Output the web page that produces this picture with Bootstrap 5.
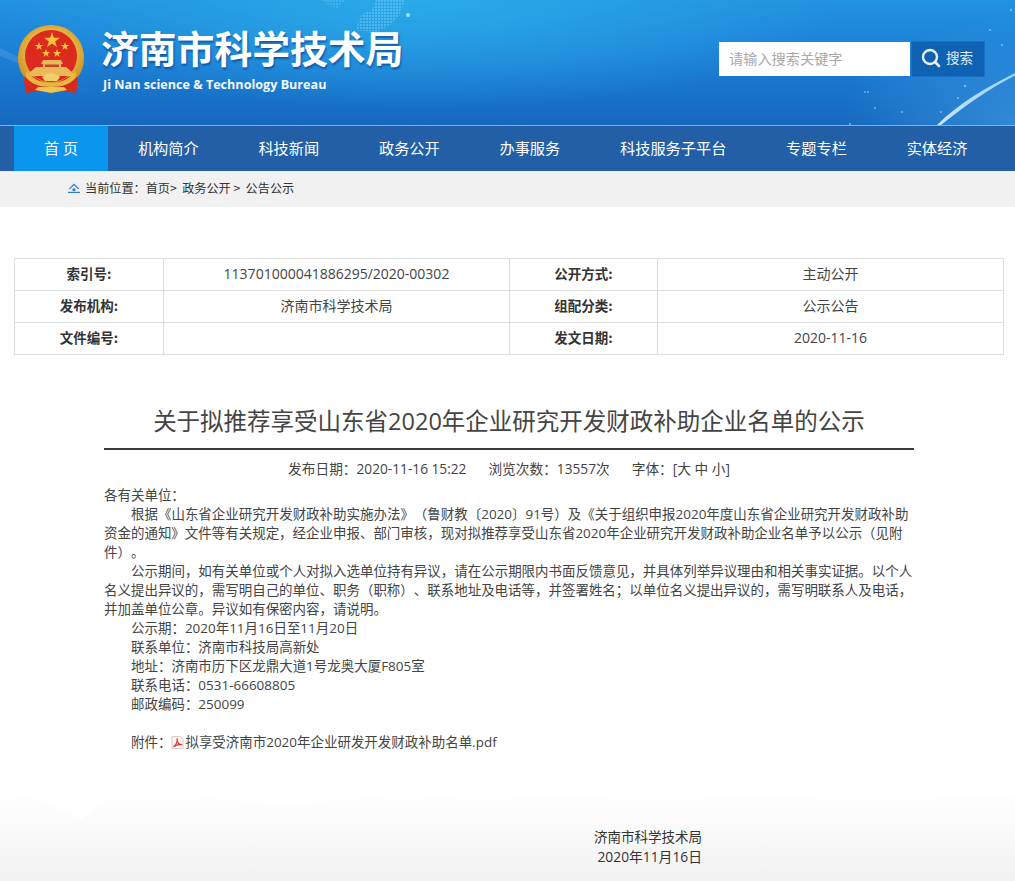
<!DOCTYPE html>
<html lang="zh-CN">
<head>
<meta charset="utf-8">
<title>济南市科学技术局</title>
<link href="https://cdn.jsdelivr.net/npm/bootstrap@5.3.0/dist/css/bootstrap.min.css" rel="stylesheet">
<style>
html,body{height:881px;overflow:hidden}
body{font-family:"Open Sans","Noto Sans CJK SC",sans-serif;font-size:14px;line-height:19px;color:#333;background:#fff;position:relative;text-spacing-trim:space-all}
.hdr{height:125px;position:relative;overflow:hidden;background:radial-gradient(ellipse 420px 110px at 420px 0,#2aaae8 0,rgba(42,170,232,0) 100%),linear-gradient(180deg,#2192de 0,#1c7fd6 45%,#1568be 100%)}
.hdr-art{position:absolute;inset:0;width:100%;height:100%}
.brand{position:relative;padding:25px 0 0 18px;gap:17px}
.brand-title{font-family:"Noto Sans CJK SC",sans-serif;font-weight:700;font-size:37.8px;line-height:46px;color:#fff;text-shadow:1px 2px 2px rgba(8,60,140,.65);margin-top:-1px;white-space:nowrap}
.brand-en{font-family:"Open Sans",sans-serif;font-weight:700;font-size:12.6px;line-height:18px;color:#fff;margin:6px 0 0 2px;white-space:nowrap;opacity:.95}
.srch{position:absolute;left:719px;top:41px;height:36px}
.srch-in{width:191px;height:34px;margin-top:1px;border:0;outline:0;padding:0 10px 2px;background:#fff;font-size:14.2px;border-radius:0;font-family:"Noto Sans CJK SC",sans-serif}
.srch-in::placeholder{color:#a9a9a9;opacity:1}
.srch-btn{width:74px;height:36px;margin-left:1px;background:#0f62b2;border:1px solid #1a70c6;color:#e6eef8;font-size:13.5px;border-radius:0;padding:0 0 2px 9px;gap:5px}
.mainnav{height:46px;background:#235fa6;border-top:1px solid #74b4ee;padding-left:14px}
.mainnav a{display:block;height:45px;line-height:43px;padding:0 29.9px;color:#fff;font-size:15.2px;text-decoration:none;white-space:nowrap;font-family:"Noto Sans CJK SC",sans-serif;font-weight:400}
.mainnav a.cur{background:#0a96ee;width:94px;padding:0;text-align:center}
.crumb{height:36px;background:#f1f1f1;padding:0 0 3px 68px;font-size:12.15px;gap:5px;color:#333;white-space:nowrap}
.crumb span{font-family:"Noto Sans CJK SC",sans-serif}
.meta-tbl{width:989px;margin:51px 0 0 14px;border-collapse:collapse;table-layout:fixed;font-size:14px;color:#444}
.meta-tbl td,.meta-tbl th{border:1px solid #ddd;height:32px;padding:0 0 2px;text-align:center;vertical-align:middle;font-weight:400}
.meta-tbl th{font-weight:700;color:#333;font-family:"Noto Sans CJK SC",sans-serif;font-size:13.5px}
.art{width:810px;margin-left:104px;position:relative}
.art-title{margin:0;padding:49px 0 10px;border-bottom:2px solid #3a3a3a;text-align:center;font-size:23.5px;line-height:34px;font-weight:400;color:#444;white-space:nowrap}
.art-meta{margin-top:9px;text-align:center;font-size:13.7px;line-height:19px;color:#444;gap:22px}
.art-body{margin-top:8px;font-size:13.48px;line-height:19px;color:#444}
.art-body p{margin:0}
.ind{text-indent:27px}
.sign{margin-top:76px;padding-right:212px;text-align:right;line-height:19px;font-size:13.5px;color:#333;white-space:nowrap}
.sign-date{font-size:13.8px}
.pdf-ic{vertical-align:-2px;margin-right:1px}
.fog{position:absolute;left:0;right:0;bottom:0;width:100%;height:100px;z-index:-1}
</style>
</head>
<body>
<svg class="fog" viewBox="0 0 1015 100" preserveAspectRatio="none" aria-hidden="true">
<defs><linearGradient id="fg" x1="0" y1="0" x2="0" y2="1"><stop offset="0" stop-color="#ffffff"/><stop offset=".5" stop-color="#f9f9f9"/><stop offset="1" stop-color="#f1f1f1"/></linearGradient></defs>
<path fill="url(#fg)" d="M0 18 30 14 60 28 82 38 110 14 135 9 190 12 240 20 300 22 400 12 480 18 560 14 640 18 720 16 800 14 900 10 960 16 1015 14V100H0Z"/>
</svg>
<header class="hdr">
<svg class="hdr-art" viewBox="0 0 1015 125" preserveAspectRatio="none" aria-hidden="true">
<defs>
<pattern id="dt" width="3" height="3" patternUnits="userSpaceOnUse"><rect width="2" height="2" fill="#7fd0f4"/></pattern>
<linearGradient id="arc" x1="0" y1="1" x2="1" y2="0"><stop offset="0" stop-color="#d8f1fd" stop-opacity=".9"/><stop offset="1" stop-color="#9fdcfa" stop-opacity=".9"/></linearGradient>
<radialGradient id="glow" cx="1" cy="1" r="1"><stop offset="0" stop-color="#4aa3e6" stop-opacity=".55"/><stop offset="1" stop-color="#4aa3e6" stop-opacity="0"/></radialGradient>
</defs>
<path d="M355 30 362 14 372 10 376 0 405 0 400 14 392 24 378 32Z" fill="url(#dt)" opacity=".45"/>
<path d="M322 0 345 0 338 8 328 6Z" fill="url(#dt)" opacity=".3"/>
<circle cx="408" cy="15" r="2" fill="#a5def8"/>
<path d="M0 48 90 92 0 56Z" fill="#fff" opacity=".1"/>
<rect x="840" y="20" width="175" height="105" fill="url(#glow)"/>
<path d="M937 125C958 104 985 88 1015 73V75.500C989 89 966 105 941 125Z" fill="url(#arc)"/>
<g fill="#a8d8f6" opacity=".65"><circle cx="865" cy="92" r="1"/><circle cx="868" cy="92" r="1"/><circle cx="965" cy="86" r="1.200"/><circle cx="902" cy="112" r="1"/><circle cx="941" cy="112" r="1"/><circle cx="980" cy="72" r="1"/><circle cx="1002" cy="45" r="1"/><circle cx="1011" cy="10" r="1.200"/><circle cx="875" cy="108" r="1"/><circle cx="850" cy="124" r="1"/><circle cx="990" cy="30" r="1"/><circle cx="958" cy="98" r="1"/></g>
</svg>
<div class="brand d-flex align-items-start">
<svg width="66" height="70" viewBox="0 0 66 70" class="flex-shrink-0" aria-hidden="true">
<defs><radialGradient id="gd" cx=".5" cy=".45" r=".6"><stop offset=".6" stop-color="#e8b440"/><stop offset="1" stop-color="#c98f22"/></radialGradient></defs>
<path d="M33 0C15 0 0 14 0 33c0 12 6 21 14 27h38c8-6 14-15 14-27C66 14 51 0 33 0Z" fill="url(#gd)"/>
<circle cx="33" cy="31" r="26" fill="#dd2a1f"/>
<g fill="#f5c53a">
<path d="M34 7l1.900 5.800h6.100l-4.900 3.600 1.900 5.800-5-3.600-5 3.600 1.900-5.800-4.900-3.600h6.100Z"/>
<path d="M21 17l1 3h3.200l-2.600 1.900 1 3-2.600-1.900-2.600 1.900 1-3-2.600-1.900H20Z"/>
<path d="M47 17l1 3h3.200l-2.600 1.900 1 3-2.600-1.900-2.600 1.900 1-3-2.600-1.900H46Z"/>
<path d="M28 24l1 3h3.200l-2.600 1.900 1 3-2.600-1.900-2.600 1.900 1-3-2.600-1.900H27Z"/>
<path d="M39 24l1 3h3.200l-2.600 1.900 1 3-2.600-1.900-2.600 1.900 1-3-2.600-1.900H38Z"/>
</g>
<path d="M25 35h18l2 4h-2v3h5l7 6v3H11v-3l7-6h7v-3h-2Z" fill="#e9b857"/>
<path d="M27 39.500h14v2.500H27Z" fill="#c7462a"/>
<path d="M7 50 16 52 27 58H39L50 52 59 50 60 56 58 68 46 66 33 63 20 66 8 68 6 56Z" fill="#d92a1e"/>
<path d="M9 46c5 8 14 12 24 12s19-4 24-12l2 5c-5 8-15 11-26 11S12 59 7 51Z" fill="#e9b63f"/>
<path d="M24 52c3-3 6-3 9-4 3 1 6 1 9 4l-3 4H27Z" fill="#f2cd6b"/>
<path d="M20 62h26l3 3-16 3-16-3Z" fill="#f0c552"/>
</svg>
<div>
<div class="brand-title">济南市科学技术局</div>
<div class="brand-en">Ji Nan science &amp; Technology Bureau</div>
</div>
</div>
<form class="srch d-flex" onsubmit="return false">
<input class="srch-in" type="text" placeholder="请输入搜索关键字">
<button class="srch-btn d-flex align-items-center" type="button">
<svg width="20" height="20" viewBox="0 0 20 20" fill="none" stroke="#e8f1fa" aria-hidden="true"><circle cx="9" cy="9" r="7" stroke-width="2.400"/><path d="M14 14l4 4" stroke-width="2.600" stroke-linecap="round"/></svg>
<span>搜索</span>
</button>
</form>
</header>
<nav class="mainnav d-flex">
<a class="cur" href="#">首 页</a>
<a href="#">机构简介</a>
<a href="#">科技新闻</a>
<a href="#">政务公开</a>
<a href="#">办事服务</a>
<a href="#">科技服务子平台</a>
<a href="#">专题专栏</a>
<a href="#">实体经济</a>
</nav>
<div class="crumb d-flex align-items-center">
<svg width="12" height="10" viewBox="0 0 12 10" aria-hidden="true"><path d="M6 .5 11.500 6H10L6 2.300 2 6H.5Z" fill="#2b7cc4"/><path d="M4.500 5.500h3V8h-3Z" fill="#2b7cc4"/><path d="M0 8.800h12V10H0Z" fill="#2b7cc4"/></svg>
<span>当前位置：首页&gt;&nbsp; 政务公开 &gt;&nbsp; 公告公示</span>
</div>
<table class="meta-tbl">
<colgroup><col style="width:149px"><col style="width:346px"><col style="width:148px"><col style="width:346px"></colgroup>
<tr><th>索引号:</th><td>113701000041886295/2020-00302</td><th>公开方式:</th><td>主动公开</td></tr>
<tr><th>发布机构:</th><td>济南市科学技术局</td><th>组配分类:</th><td>公示公告</td></tr>
<tr><th>文件编号:</th><td></td><th>发文日期:</th><td>2020-11-16</td></tr>
</table>
<main class="art">
<h1 class="art-title">关于拟推荐享受山东省2020年企业研究开发财政补助企业名单的公示</h1>
<div class="art-meta d-flex justify-content-center"><span>发布日期：2020-11-16 15:22</span><span>浏览次数：13557次</span><span>字体：[大 中 小]</span></div>
<div class="art-body">
<p>各有关单位：</p>
<p class="ind">根据《山东省企业研究开发财政补助实施办法》（鲁财教〔2020〕91号）及《关于组织申报2020年度山东省企业研究开发财政补助资金的通知》文件等有关规定，经企业申报、部门审核，现对拟推荐享受山东省2020年企业研究开发财政补助企业名单予以公示（见附件）。</p>
<p class="ind">公示期间，如有关单位或个人对拟入选单位持有异议，请在公示期限内书面反馈意见，并具体列举异议理由和相关事实证据。以个人名义提出异议的，需写明自己的单位、职务（职称）、联系地址及电话等，并签署姓名；以单位名义提出异议的，需写明联系人及电话，并加盖单位公章。异议如有保密内容，请说明。</p>
<p class="ind">公示期：2020年11月16日至11月20日</p>
<p class="ind">联系单位：济南市科技局高新处</p>
<p class="ind">地址：济南市历下区龙鼎大道1号龙奥大厦F805室</p>
<p class="ind">联系电话：0531-66608805</p>
<p class="ind">邮政编码：250099</p>
<p>&nbsp;</p>
<p class="ind">附件：<svg class="pdf-ic" width="13" height="13" viewBox="0 0 13 14" aria-hidden="true"><path d="M.5.5h9l3 3v10H.5Z" fill="#f6f3f1" stroke="#d9c8c4"/><path d="M2 11.500C5 9.500 6.500 6 6 2.500 6 6.500 8 9.500 11.500 9.500 8 8.800 4.800 9.500 2 11.500Z" fill="none" stroke="#d8352a" stroke-width="1.200"/></svg>拟享受济南市2020年企业研发开发财政补助名单.pdf</p>
</div>
<div class="sign"><div>济南市科学技术局</div><div class="sign-date">2020年11月16日</div></div>
</main>
<script src="https://cdn.jsdelivr.net/npm/bootstrap@5.3.0/dist/js/bootstrap.bundle.min.js"></script>
</body>
</html>
